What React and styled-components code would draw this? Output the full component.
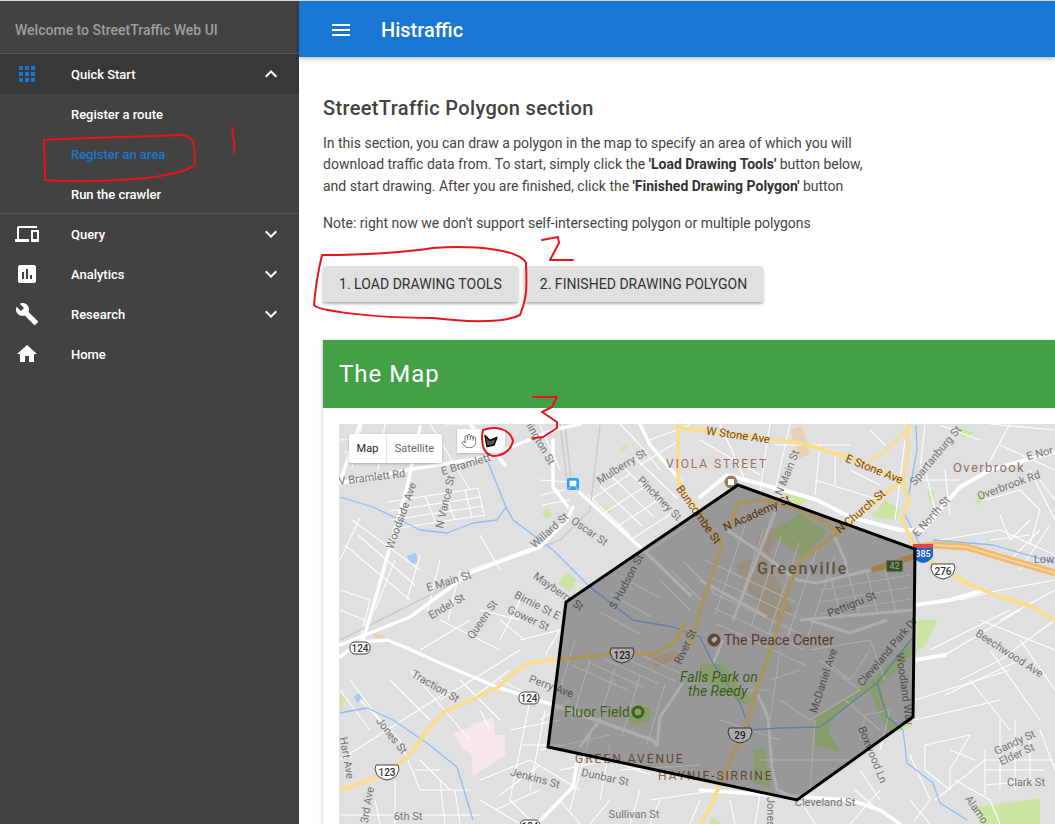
import React from "react";
import styled, { createGlobalStyle } from "styled-components";
import { MdApps, MdDevices, MdAssessment, MdBuild, MdHome, MdExpandLess, MdExpandMore, MdMenu } from "react-icons/md";
import { Hand } from "lucide-react";

const Global = createGlobalStyle`
  html, body { margin: 0; padding: 0; height: 100%; overflow: hidden; background: #fff; }
  body { font-family: Roboto, "Liberation Sans", sans-serif; }
  * { box-sizing: border-box; }
`;
const Page = styled.div`position: relative; display: flex; width: 1055px; height: 824px; overflow: hidden; background: #fff; border-top: 1px solid #d8d8d8;`;
const Sidebar = styled.aside`width: 299px; flex: none; background: #424242; color: #fff; display: flex; flex-direction: column;`;
const Brand = styled.div`height: 53px; padding: 6px 15px 0; display: flex; align-items: center; font-size: 14px; font-weight: 500; color: #9e9e9e; border-bottom: 1px solid #555;`;
const NavRow = styled.div`
  height: 40px; display: flex; align-items: center; padding-left: 15px; padding-right: 16px; font-size: 13px; font-weight: 500; letter-spacing: -.02px;
  background: ${p => (p.$open ? "#383838" : "transparent")};
  svg { flex: none; }
`;
const NavLabel = styled.span`margin-left: 32px; flex: 1;`;
const SubList = styled.div`border-bottom: 1px solid #555; height: 120px;`;
const SubItem = styled.div`height: 40px; padding-left: 71px; display: flex; align-items: center; font-size: 13px; font-weight: 500; letter-spacing: -.02px; color: ${p => (p.$active ? "#1976d2" : "#fff")};`;
const Main = styled.main`flex: 1; min-width: 0; display: flex; flex-direction: column;`;
const AppBar = styled.header`height: 56px; flex: none; background: #1976d2; color: #fff; display: flex; align-items: center; padding: 1px 0 0 30px; gap: 28px; font-size: 20px; font-weight: 500; box-shadow: 0 1px 5px rgba(0,0,0,.35); z-index: 1;`;
const Content = styled.div`padding: 39px 0 0 24px; overflow: hidden; flex: 1;`;
const Title = styled.h2`margin: 0 0 13px; font-size: 20px; line-height: 24px; font-weight: 500; color: #424242; letter-spacing: .35px;`;
const Para = styled.p`margin: 0 0 16px; font-size: 14px; line-height: 21.4px; color: #444;`;
const Strong = styled.b`font-weight: 700; color: #333;`;
const Buttons = styled.div`display: flex; gap: 6px; margin-top: 31px;`;
const Button = styled.button`height: 36px; padding: 0 16px; border: 0; border-radius: 2px; background: #e0e0e0; color: #333; font: 400 14px Roboto, sans-serif; letter-spacing: .03px; box-shadow: 0 2px 3px rgba(0,0,0,.3);`;
const Card = styled.section`width: 760px; margin-top: 38px; box-shadow: 0 1px 4px rgba(0,0,0,.3); background: #fff;`;
const CardHead = styled.div`height: 68px; background: #43a047; color: #fff; display: flex; align-items: center; padding-left: 16px; font-size: 24px; letter-spacing: 1px;`;
const CardBody = styled.div`padding: 16px;`;
const MapBox = styled.div`position: relative; width: 716px; height: 400px; overflow: hidden; background: #e0e0e0;`;
const MapSvg = styled.svg`display: block; width: 716px; height: 400px; font-family: Roboto, sans-serif;`;
const MapTypes = styled.div`position: absolute; left: 10px; top: 10px; width: 93px; height: 29px; display: flex; background: #fff; border-radius: 2px; box-shadow: 0 1px 3px rgba(0,0,0,.25); font-size: 11px; align-items: center;`;
const MapType = styled.span`flex: ${p => (p.$active ? "0 0 38px" : "1")}; text-align: center; line-height: 29px; color: ${p => (p.$active ? "#222" : "#666")}; border-right: ${p => (p.$active ? "1px solid #e6e6e6" : "0")};`;
const DrawTools = styled.div`position: absolute; left: 118px; top: 5px; width: 48px; height: 24px; background: #fff; display: flex; align-items: center; padding-left: 4px; gap: 7px; box-shadow: 0 1px 2px rgba(0,0,0,.2);`;
const Ink = styled.svg`position: absolute; left: 0; top: -1px; width: 1055px; height: 824px; pointer-events: none; z-index: 3;`;

const fam = (x, y, dx, dy, sx, sy, n) => Array.from({ length: n }, (_, i) => `M${x + i * sx} ${y + i * sy}l${dx} ${dy}`).join("");

const thin = [
  "M340 440L420 436M345 452L405 448M362 424L352 468M385 424L378 470M430 424L470 490M445 424L490 424",
  fam(387, 502, 92, -14, 2, 9, 4), "M425 496L436 523M445 493L455 520M465 490L472 517M478 488L484 515",
  "M352 520L420 570M358 535L415 585M345 545L410 600M360 518L340 560M395 560L375 610M420 555L407 600M440 560L428 610M460 570L448 620",
  "M340 590L370 600L360 640M340 610L365 620",
  "M480 535L500 570M470 570L540 545",
  "M440 620L500 650M500 640L520 600M520 620L480 610",
  "M540 425L560 470M540 480L570 482M541 495L565 490M542 505L570 500",
  fam(588, 495, 42, 40, 12, -9, 5), fam(590, 500, 40, -26, 14, 13, 5),
  "M620 424L640 445L660 470M650 440L690 425M640 465L680 440M700 440L760 475M720 424L745 480M770 424L760 490M790 424L775 490",
  "M820 445L815 495M835 450L835 485M850 470L880 485M815 480L880 500M870 430L885 445M775 445L850 445",
  "M905 440L895 520M925 425L920 470M925 470L935 510M945 470L950 515M920 480L960 480M940 425L980 440M990 424L1055 430M1000 445L1055 470M1010 424L985 470",
  "M985 500L1020 490L1040 510L1030 545M1000 515L1010 540L1030 520M1040 480L1055 500M1030 470L1055 520",
  "M940 540L1000 530L1055 555M990 540L1030 535M1050 525L1020 570M1040 530L1010 560",
  "M960 600L1000 590L1055 580M1000 620L1055 590M980 620L1055 650M945 655L1020 610M930 650L1010 610M960 680L1000 660L1055 620M1020 640L1055 690M990 650L1040 720M970 680L1010 730M945 695L1020 660M915 700L1010 670M915 720L1000 700",
  "M925 745L970 735L950 770L950 790L925 770ZM985 760L1055 760M985 770L1045 770M985 785L1040 780M1000 720L1000 790M1015 720L1015 790M985 750L985 795M1030 740L1030 780M1040 730L1055 770",
  "M935 800L985 760M955 780L990 800L1000 824M950 750L975 760M910 755L930 800L915 820M860 770L880 800M855 790L878 810",
  "M650 800L720 790M620 770L700 765M560 770L610 760L650 775M540 750L610 735M590 735L570 810M610 745L600 800M530 700L510 800M545 710L530 790M510 730L560 720M520 745L560 745",
  "M480 780L530 760L580 790M500 795L540 765M480 800L520 824M510 800L530 820M495 810L540 790M560 800L580 824M610 800L590 824M640 790L630 824M660 800L650 824",
  "M340 760L450 690M360 700L400 740L420 790M390 680L430 720M410 670L470 740M440 700L520 650M460 680L500 720M420 650L470 620M500 620L525 640M520 640L560 630L545 655",
  "M350 680L380 720M340 690L370 730M420 760L450 790M415 770L440 770M420 790L470 790M440 780L445 824M455 790L460 824M340 815L480 815M375 800L380 824M395 780L395 824",
  "M470 700L510 670M480 710L490 730M500 680L540 700M540 720L570 700M560 690L575 640",
  "M700 800L690 824M730 800L735 824M760 795L755 824M800 800L815 824M880 790L850 824M910 800L930 824",
];
const inner = [
  fam(572, 665, 55, 25, 16, -3, 5), fam(590, 660, -18, 60, 25, 8, 4),
  fam(600, 612, 40, 22, 10, -18, 3),
  fam(705, 560, 90, 42, 3, 16, 5), fam(745, 525, -30, 90, 18, 6, 6),
  fam(820, 590, 90, -15, 0, 12, 3), fam(830, 575, 12, 45, 18, -3, 4),
  fam(660, 580, 30, 30, 12, -9, 3),
  "M810 650L870 640L885 680M820 660L860 690L810 720L780 700M780 650L770 720M845 700L880 730M815 720L810 790M760 760L850 760M720 720L780 740M770 680L800 670M740 690L770 690",
  "M825 660L850 680L870 650M860 740L865 715L890 710L880 750",
];
const grey = [
  "M657 747L660 717L683 683", "M580 747L597 723", "M723 640L713 663",
  "M757 693L768 717L772 767L777 790L797 798", "M727 530L757 550L797 580L817 583L870 570",
  "M777 507L733 620", "M700 580L767 617", "M800 620L913 610", "M833 533L845 560L847 577", "M810 620L850 633L887 620",
];
const labels = [
  ["Arlington St", 540, 444, 60, "lington St"], ["E Bramlett", 466, 465, -17], ["V Bramlett Rd", 372, 478, -7], ["Woodside Ave", 402, 516, -70],
  ["N Vance St", 446, 502, -77], ["Mulberry St", 622, 467, -32], ["Pinckney St", 659, 499, 45], ["Oscar St", 589, 532, 35],
  ["Willard St", 550, 531, -42], ["E Main St", 449, 582, -17], ["Mayberry St", 558, 592, 35], ["Birnie St E", 537, 606, 27],
  ["Endel St", 447, 607, -30], ["Queen St", 483, 620, -55], ["Gower St", 528, 619, 25], ["S Hudson St", 627, 582, -62],
  ["Spartanburg St", 936, 456, -50], ["Overbrook Rd", 1009, 486, -20], ["E Nor", 1040, 454, -15], ["N Main St", 788, 473, -68],
  ["E North St", 932, 517, -48], ["Low", 1044, 560, 0], ["Pettigru St", 852, 605, -22], ["Traction St", 435, 687, 30],
  ["Perry Ave", 551, 687, 20], ["Jones St", 391, 736, 52], ["3rd Ave", 368, 805, -80], ["Hart Ave", 346, 758, 80],
  ["Jenkins St", 535, 779, 15], ["Dunbar St", 605, 778, 12], ["Sullivan St", 634, 815, 0], ["6th St", 408, 817, 0],
  ["River St", 686, 647, -65], ["McDaniel Ave", 824, 681, -72], ["Cleveland Park Dr", 888, 652, -50], ["Woodland Way", 904, 689, 82],
  ["Boxwood Ln", 872, 755, 68], ["Cleveland St", 825, 803, 0], ["Beechwood Ave", 1009, 654, 33], ["Gandy St", 1015, 743, -25],
  ["Elder St", 1017, 755, -25], ["Clark St", 1026, 783, 0], ["Jones", 770, 812, 90], ["Alamo", 976, 810, 55],
];
const arterials = [
  ["W Stone Ave", 738, 436, 8], ["E Stone Ave", 874, 470, 22], ["N Church St", 861, 512, -40],
  ["N Academy St", 757, 514, -24], ["Buncombe St", 698, 515, 55],
];
const Street = ({ t, x, y, r, fill, size = 11 }) => (
  <text x={x} y={y} transform={`rotate(${r} ${x} ${y})`} textAnchor="middle" dominantBaseline="middle" fontSize={size} fill={fill}>{t}</text>
);
const Place = ({ x, y, ls, size, fill, weight = 400, italic, children }) => (
  <text x={x} y={y} fontSize={size} letterSpacing={ls} fill={fill} fontWeight={weight} fontStyle={italic ? "italic" : "normal"}>{children}</text>
);
const Shield = ({ x, y, t }) => (
  <g>
    <path d={`M${x - 11} ${y - 7}h22q2 5 0 7q-1 6-11 8q-10-2-11-8q-2-2 0-7z`} fill="#fff" stroke="#444" strokeWidth="1" />
    <text x={x} y={y + 1} fontSize="10" textAnchor="middle" dominantBaseline="middle" fontWeight="500" fill="#333">{t}</text>
  </g>
);
const Pill = ({ x, y, t }) => (
  <g>
    <rect x={x - 10} y={y - 6} width="20" height="12" rx="5" fill="#fff" stroke="#444" />
    <text x={x} y={y + 1} fontSize="10" textAnchor="middle" dominantBaseline="middle" fontWeight="500" fill="#333">{t}</text>
  </g>
);

const CityMap = () => (
  <MapSvg viewBox="339 424 716 400">
    <rect x="339" y="424" width="716" height="400" fill="#e0e0e0" />
    <g fill="#cce5a2">
      <path d="M542 513l5-5 5 7-5 4zM603 510l5-3 3 5-4 2zM621 448l4-3 2 3-4 3zM558 583l9-11 9 8-6 12z" />
      <path d="M783 493l30 5-16 9zM872 515l13-15 15 10-3 10-17-2zM927 490l8 2-5 13zM957 427l18 6-12 5zM975 503l7-10 12-6-7 5-8 13z" />
      <path d="M917 620h20l-10 23-10 9zM897 727l15-5-2 6-13 4zM977 807l63-9v26h-57zM710 817l13 7h-13zM340 693l5 7-5 15z" />
      <path d="M815 717l25-14 37-28 36-35v13l-23 24-10 8-17 10-26 18-9 17 12 22-25-7zM870 692l10-7 7 25 10 17-7 5-13-22z" />
      <path d="M768 533l32-20 27 20-24 24zM630 707h20v13l-20 7zM700 663l25 2 15 25 15 10-10 5-20-15-25-10zM753 750l12-2 5 40-17-5z" />
    </g>
    <path d="M453 732l17-4 3-5 20-5 2 17 10 0 0 20-30 20-2 3-2-24-8-5z" fill="#f6e8ec" />
    <path d="M407 556l9-3 2 9-7 3z" fill="#a6c8f5" />
    <path d="M354 697l5-4 3 6-5 4z" fill="#a6c8f5" />
    <g fill="#e6d2b5">
      <path d="M735 565l28-10 30 55-26 12zM760 530l16 8-6 16-14-6z" opacity=".75" />
      <path d="M790 430l12-4 8 28-10 4zM368 630l14 5 10 10-12-4z" />
      <path d="M650 660l25-10 5 8-25 10z" />
    </g>
    <g fill="none" stroke="#fff" strokeWidth="1.1" strokeLinejoin="round">
      {thin.map((d, i) => <path key={i} d={d} />)}
      {inner.map((d, i) => <path key={i} d={d} />)}
    </g>
    <g fill="none" stroke="#fff" strokeWidth="3" strokeLinejoin="round">
      {grey.map((d, i) => <path key={i} d={d} />)}
    </g>
    <g fill="none" stroke="#cbcbcb" strokeWidth="1.5">
      <path d="M340 640L470 575L560 540L590 510L600 425" />
      <path d="M565 424L572 490M560 424L568 490" />
    </g>
    <g fill="none" stroke="#8dbcf7" strokeWidth="1.3" strokeLinejoin="round">
      <path d="M340 497L373 507L400 520L420 530L447 533L473 523L497 520L506 507L513 520L553 550L590 587L633 620L673 627L700 637L713 663L740 703L750 730L780 728L820 727L877 683L913 637L915 620" />
      <path d="M487 460L506 507M877 683L887 717L903 730L907 763L933 783L940 803L967 820" />
      <path d="M340 713L367 708L393 720L427 743L457 767L473 820" />
      <path d="M916 425L917 450L905 515L920 545M933 540L993 545L1055 563" />
    </g>
    <g fill="none" stroke="#fff" strokeLinejoin="round" strokeLinecap="round">
      <g strokeWidth="3.5">
        <path d="M360 424L340 482M340 483L407 470L487 457L553 430L580 424" />
        <path d="M420 427L407 487L373 607L360 650" />
        <path d="M470 424L505 465" />
        <path d="M553 440L553 487L568 507" />
        <path d="M573 507L567 520L540 547L470 573L410 617L340 645" />
        <path d="M580 493L640 547L690 595" />
        <path d="M340 657L360 642L387 640L407 648L440 663L497 687L553 705L653 740L657 745" />
        <path d="M537 824L573 787L577 763" />
        <path d="M700 790L743 793L850 800L880 810L900 824" />
        <path d="M640 424L650 445L680 480" />
      </g>
      <g strokeWidth="4">
        <path d="M700 497L727 475L783 490L817 500L850 517L900 530L923 530L960 487L990 470L1055 452" />
        <path d="M915 605L950 600L985 590" />
        <path d="M915 660L945 655" />
      </g>
    </g>
    <g fill="none" stroke="#f9dc90" strokeWidth="4" strokeLinejoin="round">
      <path d="M678 424L678 475L680 487L698 510L722 545L700 610L690 648" />
      <path d="M678 428L700 430L800 443L847 457L903 480L908 500L902 520L913 543L933 563L967 583L1000 597L1033 607L1055 620" />
      <path d="M903 480L908 453L907 433L910 424M867 462L887 450L908 428" strokeWidth="3" />
      <path d="M903 480L883 495L857 517L837 533L800 560L787 593L780 620L743 733L710 807L700 824" />
      <path d="M728 527L740 502L767 500L800 510L827 523L837 533" />
      <path d="M340 790L377 777L407 758L430 727L443 713L497 688L517 670L533 662L607 655L657 653L673 643L687 623" />
    </g>
    <g fill="none" strokeLinejoin="round">
      <path d="M913 548L933 545L967 547L1000 557L1055 573" stroke="#efb96e" strokeWidth="7" />
      <path d="M913 548L933 545L967 547L1000 557L1055 573" stroke="#f7d9a6" strokeWidth="1.5" />
      <path d="M872 570L915 556" stroke="#efb96e" strokeWidth="6" />
    </g>
    <g>{labels.map(([t, x, y, r, s]) => <Street key={t} t={s || t} x={x} y={y} r={r} fill="#757575" />)}</g>
    <g>{arterials.map(([t, x, y, r]) => <Street key={t} t={t} x={x} y={y} r={r} fill="#7a4a10" size={11.5} />)}</g>
    <Place x={666} y={468} ls={1.9} size={12} fill="#8c7560">VIOLA STREET</Place>
    <Place x={953} y={472} ls={1.4} size={13} fill="#8c7560">Overbrook</Place>
    <Place x={757} y={574} ls={2} size={16} weight={500} fill="#8c7560">Greenville</Place>
    <Place x={575} y={763} ls={2} size={12} fill="#8c6a48">GREEN AVENUE</Place>
    <Place x={658} y={780} ls={1.9} size={12} fill="#8c6a48">HAYNIE-SIRRINE</Place>
    <Place x={724} y={645} size={14} fill="#7a5c48">The Peace Center</Place>
    <Place x={680} y={682} size={14} italic fill="#4e8a1f">Falls Park on</Place>
    <Place x={688} y={696} size={14} italic fill="#4e8a1f">the Reedy</Place>
    <Place x={564} y={717} size={14} ls={.1} fill="#5a9226">Fluor Field</Place>
    <circle cx="638" cy="712" r="5" fill="none" stroke="#5a9226" strokeWidth="3" />
    <circle cx="714" cy="640" r="6.5" fill="#8a6a55" />
    <path d="M711 640l3-3h3v3l-3 3z" fill="#fff" />
    <circle cx="731" cy="482" r="6.5" fill="#a07c5e" />
    <rect x="728" y="479" width="6" height="6" fill="#fff" />
    <rect x="567" y="478" width="12" height="12" rx="2" fill="#2aa7ee" />
    <path d="M570 481h6v5h-6zM570 487l-1 2M576 487l1 2" fill="#fff" stroke="#fff" strokeWidth=".7" />
    <Shield x={622} y={655} t="123" />
    <Pill x={360} y={648} t="124" />
    <Pill x={529} y={698} t="124" />
    <Shield x={387} y={772} t="123" />
    <Shield x={740} y={735} t="29" />
    <Shield x={943} y={571} t="276" />
    <Pill x={530} y={826} t="124" />
    <rect x="886" y="560" width="17" height="12" fill="#4f7a2c" stroke="#d8d8d8" />
    <text x="894.5" y="566.5" fontSize="9" fill="#e8e8e8" textAnchor="middle" dominantBaseline="middle">42</text>
    <path d="M913 546h20v10q-3 6-10 7q-7-1-10-7z" fill="#1f63c5" />
    <rect x="913" y="544" width="20" height="4" fill="#d44" />
    <text x="923" y="554.5" fontSize="9" fill="#fff" fontWeight="500" textAnchor="middle" dominantBaseline="middle">385</text>
    <polygon points="738,485 915,549 913,717 797,800 548,747 566,602" fill="#000" fillOpacity=".32" stroke="#000" strokeWidth="3" strokeLinejoin="miter" />
  </MapSvg>
);

const Nav = ({ icon: Icon, color, label, chev: Chev, open }) => (
  <NavRow $open={open}>
    <Icon size={24} color={color} />
    <NavLabel>{label}</NavLabel>
    {Chev && <Chev size={24} />}
  </NavRow>
);

export default function App() {
  return (
    <Page>
      <Global />
      <Sidebar>
        <Brand>Welcome to StreetTraffic Web UI</Brand>
        <Nav icon={MdApps} color="#1976d2" label="Quick Start" chev={MdExpandLess} open />
        <SubList>
          <SubItem>Register a route</SubItem>
          <SubItem $active>Register an area</SubItem>
          <SubItem>Run the crawler</SubItem>
        </SubList>
        <Nav icon={MdDevices} label="Query" chev={MdExpandMore} />
        <Nav icon={MdAssessment} label="Analytics" chev={MdExpandMore} />
        <Nav icon={MdBuild} label="Research" chev={MdExpandMore} />
        <Nav icon={MdHome} label="Home" />
      </Sidebar>
      <Main>
        <AppBar><MdMenu size={24} /><span>Histraffic</span></AppBar>
        <Content>
          <Title>StreetTraffic Polygon section</Title>
          <Para>
            In this section, you can draw a polygon in the map to specify an area of which you will<br />
            download traffic data from. To start, simply click the <Strong>'Load Drawing Tools'</Strong> button below,<br />
            and start drawing. After you are finished, click the <Strong>'Finished Drawing Polygon'</Strong> button
          </Para>
          <Para>Note: right now we don't support self-intersecting polygon or multiple polygons</Para>
          <Buttons>
            <Button>1. LOAD DRAWING TOOLS</Button>
            <Button>2. FINISHED DRAWING POLYGON</Button>
          </Buttons>
          <Card>
            <CardHead>The Map</CardHead>
            <CardBody>
              <MapBox>
                <CityMap />
                <MapTypes><MapType $active>Map</MapType><MapType>Satellite</MapType></MapTypes>
                <DrawTools>
                  <Hand size={16} strokeWidth={1} color="#333" />
                  <svg width="14" height="14" viewBox="0 0 14 14"><path d="M1 1.5l5 5 7-3-3 7.500-7 1.500z" fill="#555" stroke="#000" strokeWidth="1.400" strokeLinejoin="round" /></svg>
                </DrawTools>
              </MapBox>
            </CardBody>
          </Card>
        </Content>
      </Main>
      <Ink viewBox="0 0 1055 824" fill="none" stroke="#e8141c" strokeWidth="2" strokeLinejoin="round" strokeLinecap="round">
        <path d="M44 140C80 138 130 137 180 135C192 136 195 138 195 163C193 170 175 174 147 178C100 182 70 182 45 180C45 160 44 150 44 140Z" />
        <path d="M232 127L234 143L234 153" />
        <path d="M322 255C350 255 393 254 433 248C477 245 520 250 526 263C527 290 527 297 520 315C507 322 473 323 433 318C367 318 317 310 314 305C316 280 322 255 322 255Z" />
        <path d="M542 240L558 237L559 243L550 260L573 260" />
        <path d="M533 397L557 397L552 407L542 412L557 422L557 428L543 437L533 438" />
        <path d="M483 430C495 426 510 428 513 441C511 450 503 456 493 456C485 454 482 448 482 436Z" />
      </Ink>
    </Page>
  );
}
